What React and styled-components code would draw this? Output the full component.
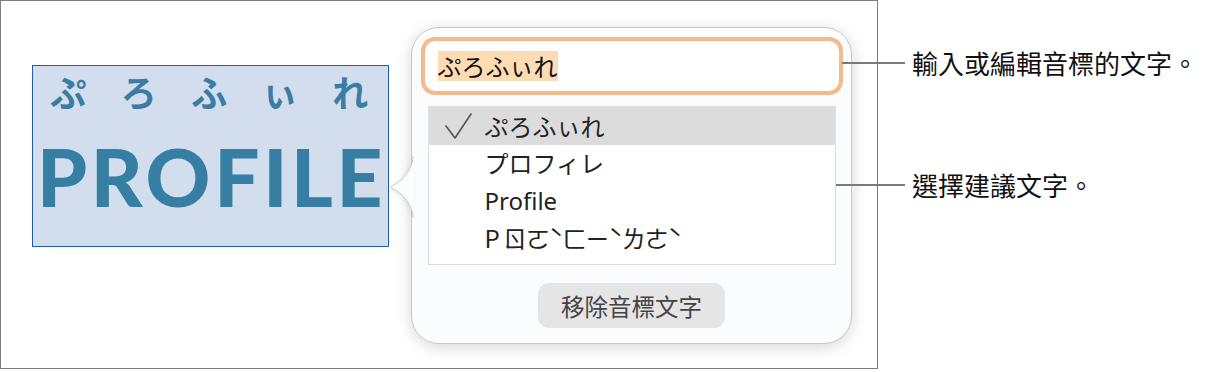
import React from "react";
import styled, { createGlobalStyle } from "styled-components";

const Global = createGlobalStyle`
  html, body { margin: 0; padding: 0; background: #ffffff; }
  body { font-family: "Noto Sans CJK TC", "Noto Sans", sans-serif; }
`;

const Page = styled.div`
  display: flex;
  align-items: flex-start;
  width: 1226px;
  height: 372px;
  overflow: hidden;
`;

const Frame = styled.div`
  box-sizing: border-box;
  flex: none;
  width: 878px;
  height: 369px;
  border: 1px solid #7d7d7d;
  display: flex;
  align-items: flex-start;
  padding: 26px 0 0 31px;
`;

const SelectionBox = styled.div`
  box-sizing: border-box;
  flex: none;
  width: 357px;
  height: 182px;
  margin-top: 38px;
  border: 1.5px solid #1c5db0;
  background: #d2ddee;
  display: flex;
  flex-direction: column;
`;

const RubyRow = styled.div`
  display: flex;
  margin-top: 5px;
  height: 40px;
`;

const RubyChar = styled.span`
  width: 70.5px;
  text-align: center;
  font-family: "Noto Sans CJK JP", sans-serif;
  font-weight: 700;
  font-size: 36px;
  line-height: 40px;
  color: #3a7ca3;
`;

const BaseText = styled.div`
  font-family: Lato, "Open Sans", sans-serif;
  font-weight: 900;
  font-size: 80px;
  line-height: 80px;
  margin-top: 25px;
  padding-left: 4px;
  letter-spacing: 3.7px;
  color: #377ea3;
  white-space: nowrap;
`;

const Popover = styled.div`
  position: relative;
  box-sizing: border-box;
  flex: none;
  width: 441px;
  height: 317px;
  margin-left: 22px;
  background: #fbfcfd;
  border: 1px solid #c9c9c9;
  border-radius: 28px;
  box-shadow: 0 3px 16px rgba(0, 0, 0, 0.16);
  display: flex;
  flex-direction: column;
  align-items: center;
  padding-top: 9px;
`;

const ArrowSvg = styled.svg`
  position: absolute;
  left: -23px;
  top: 128px;
  width: 25px;
  height: 62px;
  overflow: visible;
  filter: drop-shadow(-2px 1px 2px rgba(0, 0, 0, 0.08));
`;

const Field = styled.div`
  box-sizing: border-box;
  width: 422px;
  height: 58px;
  border: 4px solid #f6b98b;
  border-radius: 14px;
  background: #ffffff;
  display: flex;
  align-items: center;
  padding-left: 13px;
`;

const FieldText = styled.span`
  font-family: "Noto Sans CJK JP", sans-serif;
  font-size: 24px;
  line-height: 30px;
  color: #111111;
  background: #fddcb4;
`;

const List = styled.div`
  box-sizing: border-box;
  width: 408px;
  height: 159px;
  margin-top: 11px;
  border: 1px solid #dedede;
  background: #ffffff;
  display: flex;
  flex-direction: column;
`;

const Row = styled.div`
  display: flex;
  align-items: center;
  height: 37.5px;
  flex: none;
  background: ${(p) => (p.$selected ? "#dcdcdc" : "transparent")};
`;

const CheckCell = styled.div`
  width: 56px;
  flex: none;
  display: flex;
  justify-content: flex-start;
  padding-left: 16px;
  box-sizing: border-box;
`;

const RowText = styled.span`
  font-family: ${(p) =>
    p.$lang === "ja"
      ? '"Noto Sans CJK JP", sans-serif'
      : p.$lang === "latin"
      ? '"Noto Sans", sans-serif'
      : '"Noto Sans CJK TC", sans-serif'};
  font-size: 24px;
  line-height: 30px;
  color: #222222;
  letter-spacing: ${(p) => (p.$lang === "bpmf" ? "-1px" : "0")};
  white-space: pre;
`;

const RemoveButton = styled.button`
  margin-top: 18px;
  width: 187px;
  height: 45px;
  border: none;
  border-radius: 11px;
  background: #e5e5e5;
  font-family: "Noto Sans CJK TC", sans-serif;
  font-size: 23.5px;
  color: #444444;
  padding: 0;
  cursor: default;
`;

const Callouts = styled.div`
  position: relative;
  z-index: 1;
  display: flex;
  flex-direction: column;
  margin-left: -42px;
  padding-top: 48px;
  gap: 92px;
`;

const Callout = styled.div`
  display: flex;
  align-items: center;
  height: 30px;
`;

const Leader = styled.div`
  height: 1.5px;
  width: ${(p) => p.$len}px;
  margin-left: ${(p) => 69 - p.$len}px;
  background: #7a7a7a;
  flex: none;
`;

const CalloutText = styled.span`
  margin-left: 7px;
  font-family: "Noto Sans CJK TC", sans-serif;
  font-size: 26px;
  line-height: 30px;
  color: #111111;
  white-space: nowrap;
`;

const Check = () => (
  <svg width="28" height="28" viewBox="0 0 28 28">
    <path d="M1 14 L10 26 L26 2" fill="none" stroke="#555" strokeWidth="1.6" strokeLinejoin="round" strokeLinecap="round" />
  </svg>
);

const suggestions = [
  { text: "ぷろふぃれ", lang: "ja", selected: true },
  { text: "プロフィレ", lang: "ja" },
  { text: "Profile", lang: "latin" },
  { text: "P ㄖㄛˋㄈㄧˋㄌㄜˋ", lang: "bpmf" },
];

export default function App() {
  return (
    <>
      <Global />
      <Page>
        <Frame>
          <SelectionBox>
            <RubyRow>
              {["ぷ", "ろ", "ふ", "ぃ", "れ"].map((c) => (
                <RubyChar key={c}>{c}</RubyChar>
              ))}
            </RubyRow>
            <BaseText>PROFILE</BaseText>
          </SelectionBox>
          <Popover>
            <ArrowSvg viewBox="0 0 25 62">
              <path
                d="M24 0 C24 10 18 18 12 24 C6 29 2 30 2 31 C2 32 6 33 12 38 C18 44 24 52 24 62 L25 62 L25 0 Z"
                fill="#fbfcfd"
              />
              <path
                d="M24 0 C24 10 18 18 12 24 C6 29 2 30 2 31 C2 32 6 33 12 38 C18 44 24 52 24 62"
                fill="none"
                stroke="#c9c9c9"
                strokeWidth="1"
              />
            </ArrowSvg>
            <Field>
              <FieldText>ぷろふぃれ</FieldText>
            </Field>
            <List>
              {suggestions.map((s) => (
                <Row key={s.text} $selected={s.selected}>
                  <CheckCell>{s.selected ? <Check /> : null}</CheckCell>
                  <RowText $lang={s.lang}>{s.text}</RowText>
                </Row>
              ))}
            </List>
            <RemoveButton>移除音標文字</RemoveButton>
          </Popover>
        </Frame>
        <Callouts>
          <Callout>
            <Leader $len={63} />
            <CalloutText>輸入或編輯音標的文字。</CalloutText>
          </Callout>
          <Callout>
            <Leader $len={69} />
            <CalloutText>選擇建議文字。</CalloutText>
          </Callout>
        </Callouts>
      </Page>
    </>
  );
}
